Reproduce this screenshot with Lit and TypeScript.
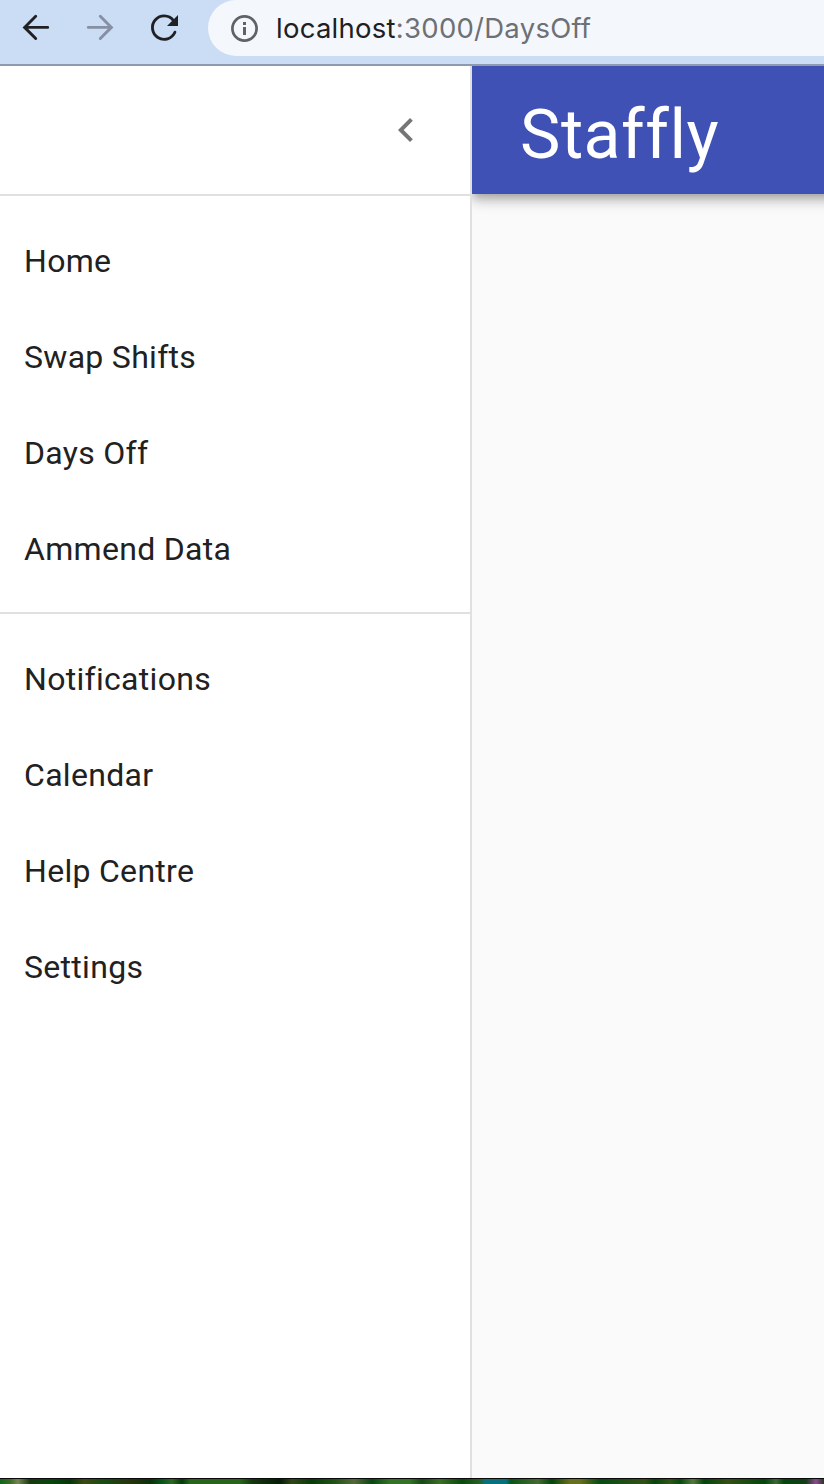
import { LitElement, html, css } from "lit";
import { customElement, property } from "lit/decorators.js";

@customElement("browser-bar")
class BrowserBar extends LitElement {
  static styles = css`
    :host { display: flex; box-sizing: border-box; height: 66px; background: #cbddf5; border-bottom: 2px solid #8e9bae; font-family: Inter, "Liberation Sans", sans-serif; }
    svg { display: block; flex: none; }
    .nav { display: flex; width: 208px; height: 56px; flex: none; }
    .pill { flex: 1; height: 56px; display: flex; align-items: center; background: #f4f7fc; border-radius: 28px 0 0 28px; overflow: hidden; }
    .info { margin-left: 16px; }
    .url { margin-left: 12px; font-size: 27.5px; line-height: 56px; white-space: nowrap; color: #6d7074; letter-spacing: 0.26px; }
    .host { color: #1f2023; }
  `;
  render() {
    return html`
      <div class="nav">
        <svg width="208" height="56" viewBox="0 0 208 56" fill="none" stroke-width="2.9" stroke-linecap="round">
          <g stroke="#202124"><path d="M47.7 27.4H25M35.7 16.3L24.6 27.4L35.7 38.5" /></g>
          <g stroke="#868fa3"><path d="M88.3 27.4H111M100.3 16.3L111.4 27.4L100.3 38.5" /></g>
          <path stroke="#202124" d="M173.3 20.3A11.7 11.7 0 1 0 174.9 32.2" />
          <path fill="#202124" d="M178 15V26H167Z" />
        </svg>
      </div>
      <div class="pill">
        <svg class="info" width="40" height="56" viewBox="0 0 40 56">
          <circle cx="20.5" cy="28.5" r="12.1" fill="none" stroke="#5f6368" stroke-width="2.7" />
          <path fill="#5f6368" d="M19 22h3v3h-3zM19 27h3v8h-3z" />
        </svg>
        <div class="url"><span class="host">localhost</span>:3000/DaysOff</div>
      </div>`;
  }
}

@customElement("nav-list")
class NavList extends LitElement {
  @property({ attribute: false }) items: string[] = [];
  static styles = css`
    :host { display: block; padding: 16px 0; }
    .item { box-sizing: border-box; height: 96px; padding: 2px 24px 0; display: flex; align-items: center; font-size: 32px; line-height: 48px; letter-spacing: 0.3px; color: #212121; }
  `;
  render() {
    return this.items.map((t) => html`<div class="item">${t}</div>`);
  }
}

@customElement("app-root")
class AppRoot extends LitElement {
  static styles = css`
    :host { display: flex; flex-direction: column; height: 1484px; overflow: hidden; font-family: Roboto, sans-serif; }
    browser-bar { flex: none; }
    .page { flex: 1; display: flex; min-height: 0; overflow: hidden; background: #fafafa; }
    .drawer { box-sizing: border-box; width: 472px; flex: none; background: #fff; border-right: 2px solid #e0e0e0; z-index: 1; position: relative; }
    .head { height: 128px; display: flex; align-items: center; justify-content: flex-end; padding-right: 40px; }
    .rule { height: 2px; background: #e0e0e0; }
    .main { flex: 1; min-width: 0; }
    .appbar { box-sizing: border-box; height: 128px; margin-right: -40px; display: flex; align-items: center; padding: 10px 0 0 48px; background: #3f51b5; color: #fff; box-shadow: 0 4px 8px -2px rgba(0,0,0,.2), 0 8px 10px 0 rgba(0,0,0,.14), 0 2px 20px 0 rgba(0,0,0,.12); }
    .title { font-size: 68px; line-height: 84px; letter-spacing: 0.5px; }
    .desk { flex: none; box-sizing: border-box; height: 6px; border-top: 1px solid #080b08;
      background: linear-gradient(90deg, #12651c 0, #396b26 10px, #758653 18px, #183810 30px, #07450e 52px, #07350b 70px, #3b4914 84px, #174b12 105px, #27330d 130px, #0b300a 150px, #08591d 163px, #326523 172px, #05390c 182px, #28651a 190px, #28651a 240px, #153710 252px, #041d05 280px, #304619 292px, #073b0a 312px, #225217 335px, #55683a 354px, #084715 372px, #347326 390px, #347326 410px, #174819 422px, #3b6e26 440px, #09490d 462px, #286024 480px, #07727c 485px, #07727c 506px, #0a5516 511px, #466931 538px, #03440e 552px, #68701b 570px, #68701b 580px, #074b15 600px, #334f14 645px, #04450e 655px, #315416 670px, #064911 680px, #57783e 693px, #04450e 704px, #334f14 728px, #04450e 765px, #3d6736 776px, #04450e 784px, #143c16 806px, #8c4b91 816px, #273626 824px); }
  `;
  render() {
    return html`
      <browser-bar></browser-bar>
      <div class="page">
        <div class="drawer">
          <div class="head">
            <svg width="48" height="48" viewBox="0 0 24 24" fill="#757575"><path d="M15.41 7.41L14 6l-6 6 6 6 1.41-1.41L10.83 12z" /></svg>
          </div>
          <div class="rule"></div>
          <nav-list .items=${["Home", "Swap Shifts", "Days Off", "Ammend Data"]}></nav-list>
          <div class="rule"></div>
          <nav-list .items=${["Notifications", "Calendar", "Help Centre", "Settings"]}></nav-list>
        </div>
        <div class="main">
          <div class="appbar"><div class="title">Staffly</div></div>
        </div>
      </div>
      <div class="desk"></div>`;
  }
}
